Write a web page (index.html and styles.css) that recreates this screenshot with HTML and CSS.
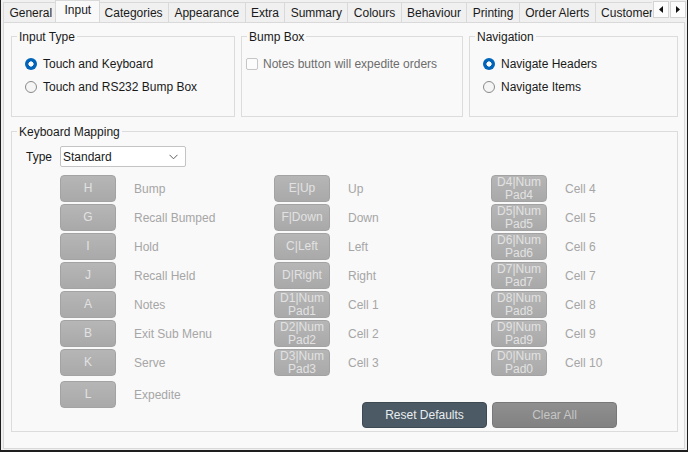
FILE: index.html
```html
<!DOCTYPE html>
<html>
<head>
<meta charset="utf-8">
<link rel="stylesheet" href="styles.css">
</head>
<body>
<div class="window">
  <div class="tabbar">
    <div class="tabs">
      <div class="tab">General</div>
      <div class="tab active">Input</div>
      <div class="tab">Categories</div>
      <div class="tab">Appearance</div>
      <div class="tab">Extra</div>
      <div class="tab">Summary</div>
      <div class="tab">Colours</div>
      <div class="tab">Behaviour</div>
      <div class="tab">Printing</div>
      <div class="tab">Order Alerts</div>
      <div class="tab">Customers</div>
    </div>
    <div class="scroller">
      <span class="arrow"><svg width="4" height="7" viewBox="0 0 4 7"><polygon points="4,0 4,7 0,3.5" fill="#111"/></svg></span>
      <span class="arrow"><svg width="4" height="7" viewBox="0 0 4 7"><polygon points="0,0 0,7 4,3.5" fill="#111"/></svg></span>
    </div>
  </div>
  <div class="panel">
    <div class="top-groups">
      <div class="group g-top">
        <div class="legend">Input Type</div>
        <div class="options opt-radio">
          <div class="opt"><span class="radio checked"></span><span>Touch and Keyboard</span></div>
          <div class="opt"><span class="radio"></span><span>Touch and RS232 Bump Box</span></div>
        </div>
      </div>
      <div class="group g-top">
        <div class="legend">Bump Box</div>
        <div class="options opt-check">
          <div class="opt disabled"><span class="checkbox"></span><span>Notes button will expedite orders</span></div>
        </div>
      </div>
      <div class="group g-top">
        <div class="legend">Navigation</div>
        <div class="options opt-radio">
          <div class="opt"><span class="radio checked"></span><span>Navigate Headers</span></div>
          <div class="opt"><span class="radio"></span><span>Navigate Items</span></div>
        </div>
      </div>
    </div>

    <div class="group g-keys">
      <div class="legend">Keyboard Mapping</div>
      <div class="type-row">
        <span class="type-label">Type</span>
        <div class="select">
          <span>Standard</span>
          <svg width="9" height="6" viewBox="0 0 9 6"><polyline points="0.5,0.8 4.5,4.8 8.5,0.8" fill="none" stroke="#606060" stroke-width="1"/></svg>
        </div>
      </div>
      <div class="keys">
        <div class="col col1">
          <div class="krow"><span class="key">H</span><span class="klabel">Bump</span></div>
          <div class="krow"><span class="key">G</span><span class="klabel">Recall Bumped</span></div>
          <div class="krow"><span class="key">I</span><span class="klabel">Hold</span></div>
          <div class="krow"><span class="key">J</span><span class="klabel">Recall Held</span></div>
          <div class="krow"><span class="key">A</span><span class="klabel">Notes</span></div>
          <div class="krow"><span class="key">B</span><span class="klabel">Exit Sub Menu</span></div>
          <div class="krow"><span class="key">K</span><span class="klabel">Serve</span></div>
          <div class="krow last"><span class="key">L</span><span class="klabel">Expedite</span></div>
        </div>
        <div class="right">
          <div class="cols">
            <div class="col col2">
              <div class="krow"><span class="key">E|Up</span><span class="klabel">Up</span></div>
              <div class="krow"><span class="key">F|Down</span><span class="klabel">Down</span></div>
              <div class="krow"><span class="key">C|Left</span><span class="klabel">Left</span></div>
              <div class="krow"><span class="key">D|Right</span><span class="klabel">Right</span></div>
              <div class="krow"><span class="key">D1|Num<br>Pad1</span><span class="klabel">Cell 1</span></div>
              <div class="krow"><span class="key">D2|Num<br>Pad2</span><span class="klabel">Cell 2</span></div>
              <div class="krow"><span class="key">D3|Num<br>Pad3</span><span class="klabel">Cell 3</span></div>
            </div>
            <div class="col col3">
              <div class="krow"><span class="key">D4|Num<br>Pad4</span><span class="klabel">Cell 4</span></div>
              <div class="krow"><span class="key">D5|Num<br>Pad5</span><span class="klabel">Cell 5</span></div>
              <div class="krow"><span class="key">D6|Num<br>Pad6</span><span class="klabel">Cell 6</span></div>
              <div class="krow"><span class="key">D7|Num<br>Pad7</span><span class="klabel">Cell 7</span></div>
              <div class="krow"><span class="key">D8|Num<br>Pad8</span><span class="klabel">Cell 8</span></div>
              <div class="krow"><span class="key">D9|Num<br>Pad9</span><span class="klabel">Cell 9</span></div>
              <div class="krow"><span class="key">D0|Num<br>Pad0</span><span class="klabel">Cell 10</span></div>
            </div>
          </div>
          <div class="actions">
            <span class="act reset">Reset Defaults</span>
            <span class="act clear">Clear All</span>
          </div>
        </div>
      </div>
    </div>
  </div>
</div>
</body>
</html>
```

FILE: styles.css
```css
* { box-sizing: border-box; }
html, body { margin: 0; padding: 0; }
body {
  width: 688px;
  height: 452px;
  overflow: hidden;
  font-family: "Liberation Sans", Arial, sans-serif;
  font-size: 12px;
  color: #1a1a1a;
  background: #f0f0f0;
}
.window {
  width: 688px;
  height: 452px;
  border-left: 1px solid #1e1e1e;
  border-right: 1px solid #1e1e1e;
  border-bottom: 2px solid #1e1e1e;
  background: #f0f0f0;
  display: flex;
  flex-direction: column;
}

/* Tabs */
.tabbar {
  height: 22px;
  display: flex;
  align-items: flex-start;
  padding-left: 2px;
}
.tabs {
  flex: 1;
  min-width: 0;
  height: 22px;
  display: flex;
  align-items: flex-end;
  overflow: hidden;
}
.tab {
  flex: none;
  height: 20px;
  line-height: 20px;
  padding: 0 5.4px;
  border: 1px solid #d9d9d9;
  border-bottom: none;
  margin-right: -1px;
  background: #f0f0f0;
  white-space: nowrap;
}
.tab.active {
  height: 22px;
  line-height: 19px;
  padding: 0 8px;
  margin-left: -2px;
  margin-right: -2px;
  background: #f9f9f9;
  position: relative;
  z-index: 1;
}
.scroller {
  flex: none;
  display: flex;
  gap: 1px;
  margin: 1px 1px 0 1px;
}
.arrow {
  width: 16px;
  height: 17px;
  border: 1px solid #d4d4d4;
  background: #fcfcfc;
  display: flex;
  align-items: center;
  justify-content: center;
}

/* Panel */
.panel {
  height: 427px;
  margin: 0 2px;
  border: 1px solid #d9d9d9;
  background: #f9f9f9;
  padding: 13px 6px 0 7px;
}
.top-groups {
  display: grid;
  grid-template-columns: 224px 222px 209px;
  column-gap: 6px;
}
.group {
  border: 1px solid #dcdcdc;
}
.g-top { height: 81px; }
.legend {
  width: fit-content;
  height: 14px;
  line-height: 14px;
  margin: -7px 0 0 5px;
  padding: 0 2px;
  background: #f9f9f9;
  color: #1a1a1a;
}
.options {
  display: flex;
  flex-direction: column;
  gap: 3px;
  margin-top: 10px;
}
.opt-radio { padding-left: 13px; }
.opt-check { padding-left: 4px; }
.opt {
  height: 20px;
  display: flex;
  align-items: center;
  gap: 6px;
  white-space: nowrap;
}
.opt.disabled { color: #6d6d6d; gap: 5px; }
.radio {
  width: 12px;
  height: 12px;
  border-radius: 50%;
  border: 1px solid #8a8a8a;
  background: #f5f5f5;
  flex: none;
}
.radio.checked {
  border: none;
  background: radial-gradient(circle, #ffffff 0 2.3px, #0064b9 2.9px);
}
.checkbox {
  width: 12px;
  height: 12px;
  border: 1px solid #c6c6c6;
  border-radius: 2px;
  background: #fcfcfc;
  flex: none;
}

/* Keyboard mapping */
.g-keys {
  margin-top: 14px;
  padding-bottom: 3px;
}
.type-row {
  display: flex;
  align-items: center;
  margin-top: 7px;
  padding-left: 14px;
}
.type-label { width: 34px; }
.select {
  width: 126px;
  height: 21px;
  border: 1px solid #c4c4c4;
  background: #ffffff;
  display: flex;
  align-items: center;
  justify-content: space-between;
  padding: 0 7px 0 2px;
  border-radius: 2px;
}
.keys {
  display: flex;
  align-items: flex-start;
  margin-top: 8px;
  padding-left: 48px;
}
.col {
  display: flex;
  flex-direction: column;
  gap: 2px;
}
.col1 { width: 214px; }
.col2 { width: 217px; }
.right { flex: 1; display: flex; flex-direction: column; }
.cols { display: flex; }
.krow {
  height: 27px;
  display: flex;
  align-items: center;
}
.krow.last { margin-top: 3px; }
.key {
  flex: none;
  width: 56px;
  height: 27px;
  border: 1px solid #a3a3a3;
  border-radius: 4px;
  background: linear-gradient(#b6b6b6, #a9a9a9);
  color: #e2e2e2;
  display: flex;
  align-items: center;
  justify-content: center;
  text-align: center;
  line-height: 13px;
  overflow: hidden;
  white-space: nowrap;
}
.klabel {
  margin-left: 18px;
  color: #a6a6a6;
  white-space: nowrap;
}
.actions {
  display: flex;
  justify-content: flex-end;
  gap: 5px;
  margin-top: 26px;
  padding-right: 60px;
}
.act {
  width: 125px;
  height: 26px;
  border-radius: 4px;
  display: flex;
  align-items: center;
  justify-content: center;
  font-size: 12px;
}
.reset {
  background: #4b5a64;
  border: 1px solid #3e4a53;
  color: #e9edf0;
}
.clear {
  background: linear-gradient(#8f8f8f, #828282);
  border: 1px solid #787878;
  color: #c6c6c6;
}
```
